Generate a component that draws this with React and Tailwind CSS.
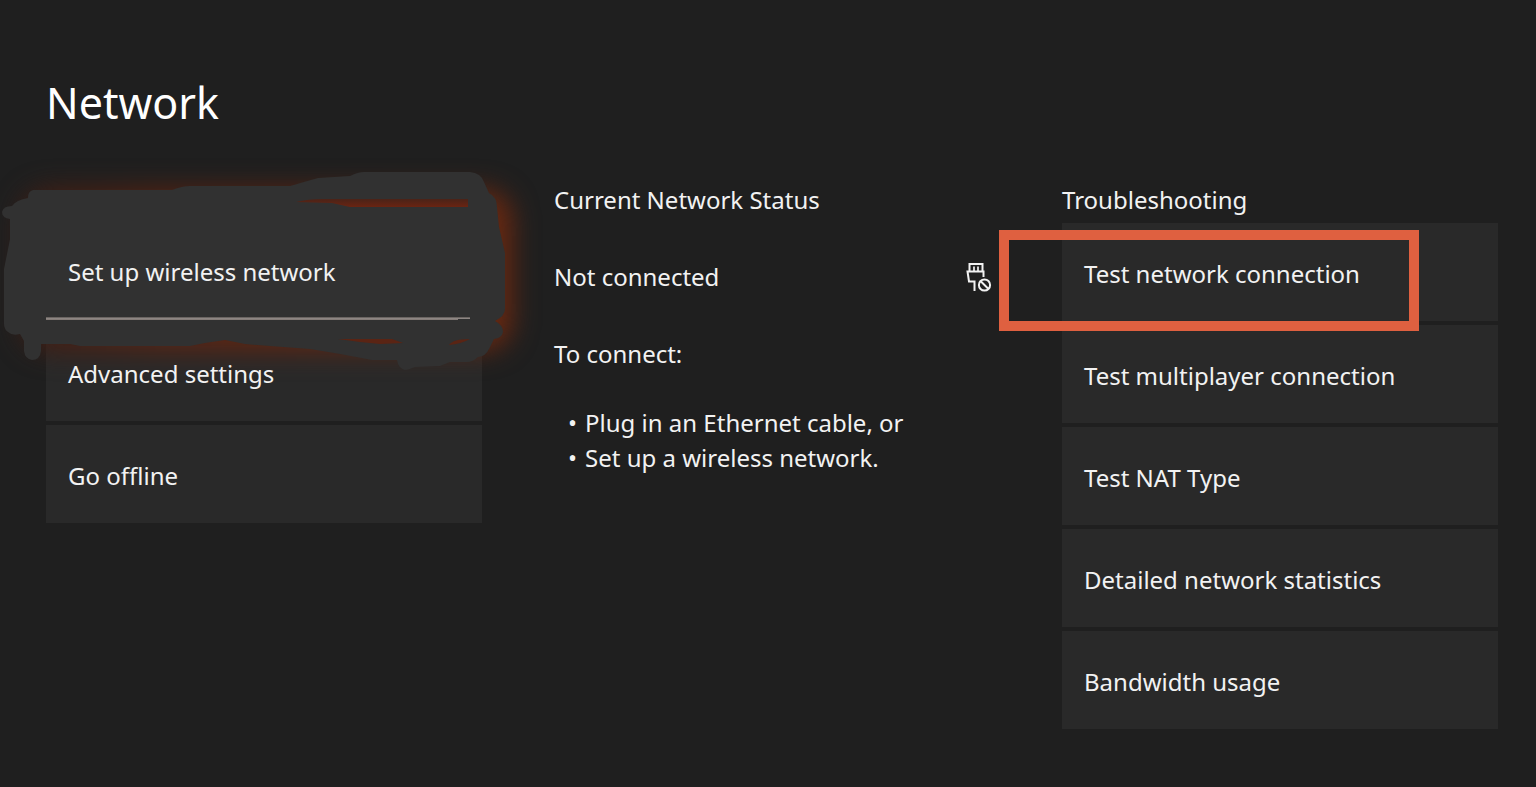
const settings = ["Set up wireless network", "Advanced settings", "Go offline"];

const troubleshooting = [
  "Test network connection",
  "Test multiplayer connection",
  "Test NAT Type",
  "Detailed network statistics",
  "Bandwidth usage",
];

function Tile({ label }) {
  return (
    <button
      type="button"
      className="flex h-[98px] w-full items-center bg-[#292929] px-[22px] pt-[2px] text-left"
    >
      <span className="relative z-20">{label}</span>
    </button>
  );
}

function BrushHighlight() {
  return (
    <svg
      aria-hidden="true"
      className="pointer-events-none absolute -left-[46px] -top-[33px] z-10 overflow-visible"
      width="560"
      height="250"
      viewBox="0 150 560 250"
      fill="none"
    >
      <defs>
        <filter id="glow" x="-20%" y="-40%" width="140%" height="180%" colorInterpolationFilters="sRGB">
          <feGaussianBlur stdDeviation="13" />
        </filter>
        <linearGradient id="glowFill" x1="0" y1="0" x2="1" y2="0">
          <stop offset="0" stopColor="#3e1e15" />
          <stop offset="0.3" stopColor="#5a2413" />
          <stop offset="1" stopColor="#6a2810" />
        </linearGradient>
        <linearGradient id="streak" x1="0" y1="0" x2="0" y2="1">
          <stop offset="0" stopColor="#4a2318" />
          <stop offset="1" stopColor="#6a2412" />
        </linearGradient>
      </defs>
      <rect x="20" y="190" width="492" height="162" rx="30" fill="url(#glowFill)" filter="url(#glow)" />
      <path
        fill="#313131"
        d="M33 191H172Q182 187 190 187H290Q300 184 318 179L350 177Q358 173 364 173H470Q481 174 484 183L489 194Q497 198 497 208L499 228L505 254V310Q505 317 495 322Q503 326 503 333Q502 339 494 340L489 350Q486 357 478 358Q473 363 467 363H450L440 367L415 368Q408 371 405 371Q398 369 397 361H372L340 355L310 350L270 347L245 345L225 341L205 344L190 347H80L70 345H41V352Q40 361 32 361Q25 360 24 352V342L20 335Q12 337 8 333Q4 330 4 325V270L10 240V220Q2 219 2 213Q3 207 12 207Q16 201 28 199Q28 192 33 191Z"
      />
      <path fill="url(#streak)" d="M296 203Q308 200 322 200H468V208H350L332 204Z" />
      <path fill="#5a2414" d="M338 340H392L403 344L380 345L360 343Z" />
      <path fill="#5a2414" d="M449 346Q453 340 470 340Q461 345 449 346Z" />
      <rect x="46" y="318" width="424" height="1" fill="#6b6562" />
      <rect x="46" y="319" width="424" height="1" fill="#8d8683" />
      <rect x="46" y="320" width="412" height="1" fill="#857c78" />
    </svg>
  );
}

function EthernetOffIcon() {
  return (
    <svg
      aria-label="Disconnected"
      role="img"
      className="h-8 w-6 shrink-0 overflow-visible"
      viewBox="2 0 24 32"
      fill="none"
      stroke="#f2f2f2"
      strokeWidth="2"
    >
      <path d="M5.500 10V3H18.500V10" />
      <path d="M10 5.500V10M14 5.500V10" strokeWidth="1.700" />
      <path d="M19.500 16V10.500H3.500L5 20.500H10.500V30" />
      <circle cx="20.500" cy="24" r="5.600" />
      <path d="M16.500 20L24.500 28" />
    </svg>
  );
}

export default function App() {
  return (
    <main className="min-h-screen overflow-hidden bg-[#1f1f1f] pb-14 pl-[46px] pr-[38px] pt-[71px] font-['Noto_Sans','Open_Sans',sans-serif] text-[24px] leading-[35px] text-[#f2f2f2]">
      <h1 className="text-[43px] leading-[64px] text-white">Network</h1>
      <div className="mt-[47px] grid grid-cols-3 gap-[72px]">
        <nav aria-label="Network settings" className="relative pt-[39px]">
          <BrushHighlight />
          <ul className="flex flex-col gap-1">
            {settings.map((label) => (
              <li key={label}>
                <Tile label={label} />
              </li>
            ))}
          </ul>
        </nav>

        <section>
          <h2>Current Network Status</h2>
          <div className="mt-[42px] flex items-center justify-between">
            <p>Not connected</p>
            <EthernetOffIcon />
          </div>
          <p className="mt-[42px]">To connect:</p>
          <ul className="mt-[34px] pl-[14px]">
            <li className="flex gap-2">
              <span aria-hidden="true">•</span>Plug in an Ethernet cable, or
            </li>
            <li className="flex gap-2">
              <span aria-hidden="true">•</span>Set up a wireless network.
            </li>
          </ul>
        </section>

        <section>
          <h2>Troubleshooting</h2>
          <ul className="mt-[6px] flex flex-col gap-1">
            {troubleshooting.map((label, i) => (
              <li key={label} className="relative">
                <Tile label={label} />
                {i === 0 && (
                  <div className="pointer-events-none absolute -bottom-[10px] -left-[63px] right-[79px] top-[7px] z-10 border-10 border-[#df6040]" />
                )}
              </li>
            ))}
          </ul>
        </section>
      </div>
    </main>
  );
}
